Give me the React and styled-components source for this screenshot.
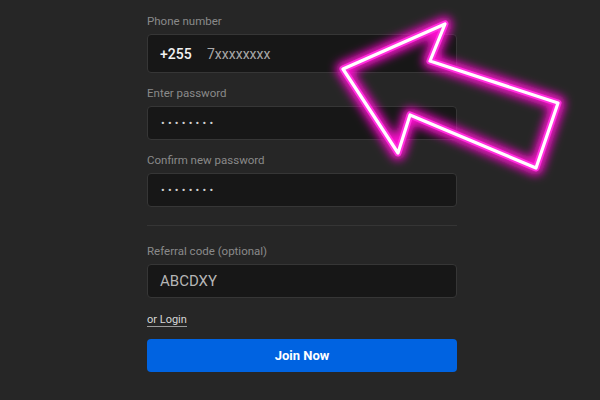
import React from 'react'
import styled, { createGlobalStyle } from 'styled-components'

const GlobalStyle = createGlobalStyle`
  html, body {
    margin: 0;
    padding: 0;
    background: #262626;
  }
  body {
    font-family: Roboto, "Liberation Sans", Arial, sans-serif;
  }
`

const arrowPoints = '343,69 445,24 430,61 558,103 536,168 410,115 398,153'

const App = () => {
    return (
        <Page>
            <GlobalStyle />
            <Form>
                <Label>Phone number</Label>
                <Field tall>
                    <Prefix>+255</Prefix>
                    <Value>7xxxxxxxx</Value>
                </Field>

                <Label>Enter password</Label>
                <Field>
                    <Dots>••••••••</Dots>
                </Field>

                <Label>Confirm new password</Label>
                <Field>
                    <Dots>••••••••</Dots>
                </Field>

                <Divider />

                <Label>Referral code (optional)</Label>
                <Field>
                    <Code>ABCDXY</Code>
                </Field>

                <LoginLink>or Login</LoginLink>
                <JoinButton>Join Now</JoinButton>
            </Form>

            <Arrow viewBox="0 0 600 400" width="600" height="400">
                <defs>
                    <filter id="glow" x="-20%" y="-20%" width="140%" height="140%">
                        <feGaussianBlur stdDeviation="5" />
                    </filter>
                </defs>
                <polygon points={arrowPoints} fill="none" stroke="#ff10d0" strokeWidth="14" strokeLinejoin="round" filter="url(#glow)" />
                <polygon points={arrowPoints} fill="none" stroke="#ff30dc" strokeWidth="7" strokeLinejoin="round" />
                <polygon points={arrowPoints} fill="none" stroke="#fff" strokeWidth="3.2" strokeLinejoin="round" />
            </Arrow>
        </Page>
    )
}

export default App

const Page = styled.div`
  position: relative;
  width: 600px;
  height: 400px;
  overflow: hidden;
  display: flex;
  justify-content: center;
  padding-left: 4px;
  box-sizing: border-box;
  background: #262626;
`

const Form = styled.div`
  width: 310px;
  padding-top: 14px;
  display: flex;
  flex-direction: column;
`

const Label = styled.div`
  font-size: 11.5px;
  line-height: 15px;
  color: #8a8a8a;
  margin-bottom: 5px;
`

const Field = styled.div`
  height: ${p => (p.tall ? '39px' : '34px')};
  box-sizing: border-box;
  background: #171717;
  border: 1px solid #363636;
  border-radius: 4px;
  display: flex;
  align-items: center;
  padding: 0 12px;
  margin-bottom: 13px;
`

const Prefix = styled.span`
  color: #f2f2f2;
  font-size: 14px;
  font-weight: 500;
  width: 47px;
`

const Value = styled.span`
  color: #a9a9a9;
  font-size: 14px;
`

const Dots = styled.span`
  color: #d0d0d0;
  font-size: 11px;
  letter-spacing: 3.2px;
  padding-left: 1px;
`

const Code = styled.span`
  color: #b5b5b5;
  font-size: 15px;
`

const Divider = styled.div`
  height: 1px;
  background: #353535;
  margin: 5px 0 18px;
`

const LoginLink = styled.a`
  align-self: flex-start;
  font-size: 11px;
  line-height: 13px;
  color: #d8d8d8;
  border-bottom: 1px solid #9a9a9a;
  margin-top: 2px;
  margin-bottom: 12px;
  cursor: pointer;
`

const JoinButton = styled.button`
  height: 33px;
  border: none;
  border-radius: 4px;
  background: #0063e1;
  color: #fff;
  font-family: Roboto, "Liberation Sans", Arial, sans-serif;
  font-size: 13px;
  font-weight: 700;
  cursor: pointer;
`

const Arrow = styled.svg`
  position: absolute;
  left: 0;
  top: 0;
  pointer-events: none;
`
